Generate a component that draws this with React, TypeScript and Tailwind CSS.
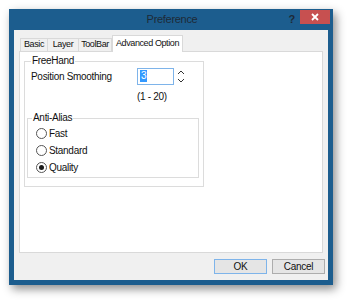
import React from 'react';

const tabs = [
  { t: 'Basic', w: 'w-[28px]' },
  { t: 'Layer', w: 'w-[32px]' },
  { t: 'ToolBar', w: 'w-[34px]' },
];

const Radio: React.FC<{ label: string; checked?: boolean }> = ({ label, checked }) => (
  <div className="flex items-center h-[17px] pl-[8px]">
    <span className="w-[11px] h-[11px] rounded-full border border-[#555] bg-white flex items-center justify-center mr-[2px]">
      {checked && <span className="w-[5px] h-[5px] rounded-full bg-[#1a1a1a]" />}
    </span>
    <span>{label}</span>
  </div>
);

const App: React.FC = () => {
  return (
    <div
      className="w-[350px] h-[301px] bg-white pl-[9px] pt-[9px] text-[10px] tracking-[-0.3px] text-[#111]"
      style={{ fontFamily: '"Liberation Sans", Arial, sans-serif' }}
    >
      <div className="w-[324px] h-[276px] bg-[#1c5d8e] flex flex-col shadow-[3px_4px_9px_rgba(0,0,0,0.45)]">
        {/* title bar */}
        <div className="h-[21px] flex items-center relative">
          <div className="flex-1 text-center text-[11px] text-[#1e2a36] pl-[2px]">Preference</div>
          <span className="absolute right-[38px] top-[2px] text-[11px] font-bold text-[#1e2a36]">?</span>
          <div className="absolute right-[3px] top-[1px] w-[30px] h-[14px] bg-[#c75050] flex items-center justify-center">
            <svg width="8" height="8" viewBox="0 0 8 8">
              <path d="M1 1 L7 7 M7 1 L1 7" stroke="white" strokeWidth="1.8" />
            </svg>
          </div>
        </div>

        {/* client area */}
        <div className="mx-[5px] mb-[5px] flex-1 bg-[#f0f0f0] flex flex-col">
          {/* tabs */}
          <div className="flex items-end pl-[6px] pt-[5px] h-[21px]">
            {tabs.map((tb) => (
              <div
                key={tb.t}
                className={`${tb.w} h-[13px] border border-b-0 border-[#d9d9d9] bg-[#f0f0f0] flex items-center justify-center text-[9px] tracking-[-0.4px] -ml-[1px] first:ml-0`}
                style={{ fontFamily: '"Liberation Sans Narrow", "Liberation Sans", sans-serif' }}
              >
                {tb.t}
              </div>
            ))}
            <div
              className="w-[71px] h-[17px] border border-b-0 border-[#d9d9d9] bg-white flex items-center justify-center text-[9px] tracking-[-0.4px] -mb-[1px] relative z-10"
              style={{ fontFamily: '"Liberation Sans Narrow", "Liberation Sans", sans-serif' }}
            >
              Advanced Option
            </div>
          </div>

          {/* panel */}
          <div className="mx-[5px] h-[202px] bg-white border border-[#d9d9d9] pl-[4px] pt-[3px]">
            <fieldset className="w-[180px] h-[132px] border border-[#dcdcdc] px-[2px] pb-[4px]">
              <legend className="ml-[4px] px-[1px] text-[10px] leading-[12px]">FreeHand</legend>
              <div className="flex items-center pl-[4px] h-[18px]">
                <span className="w-[106px]">Position Smoothing</span>
                <div className="w-[37px] h-[17px] border border-[#7eb4ea] bg-white flex items-center pl-[2px]">
                  <span className="bg-[#3399ff] text-white px-[1px] leading-[12px]">3</span>
                </div>
                <svg width="8" height="17" viewBox="0 0 8 17" className="ml-[3px]">
                  <path d="M1 6 L4 3 L7 6" stroke="#333" strokeWidth="1" fill="none" />
                  <path d="M1 11 L4 14 L7 11" stroke="#333" strokeWidth="1" fill="none" />
                </svg>
              </div>
              <div className="pl-[110px] mt-[4px] h-[14px]">(1 - 20)</div>
              <fieldset className="mt-[9px] w-[172px] h-[66px] border border-[#dcdcdc] pt-[1px]">
                <legend className="ml-[4px] px-[1px] text-[10px] leading-[12px]">Anti-Alias</legend>
                <Radio label="Fast" />
                <Radio label="Standard" />
                <Radio label="Quality" checked />
              </fieldset>
            </fieldset>
          </div>

          {/* buttons */}
          <div className="flex justify-end gap-[5px] pr-[3px] mt-[6px]">
            <button className="w-[53px] h-[15px] border border-[#7eb4ea] bg-[#e5e5e5] text-[10px] leading-none">OK</button>
            <button className="w-[53px] h-[15px] border border-[#adadad] bg-[#e5e5e5] text-[10px] leading-none">Cancel</button>
          </div>
        </div>
      </div>
    </div>
  );
};

export default App;
